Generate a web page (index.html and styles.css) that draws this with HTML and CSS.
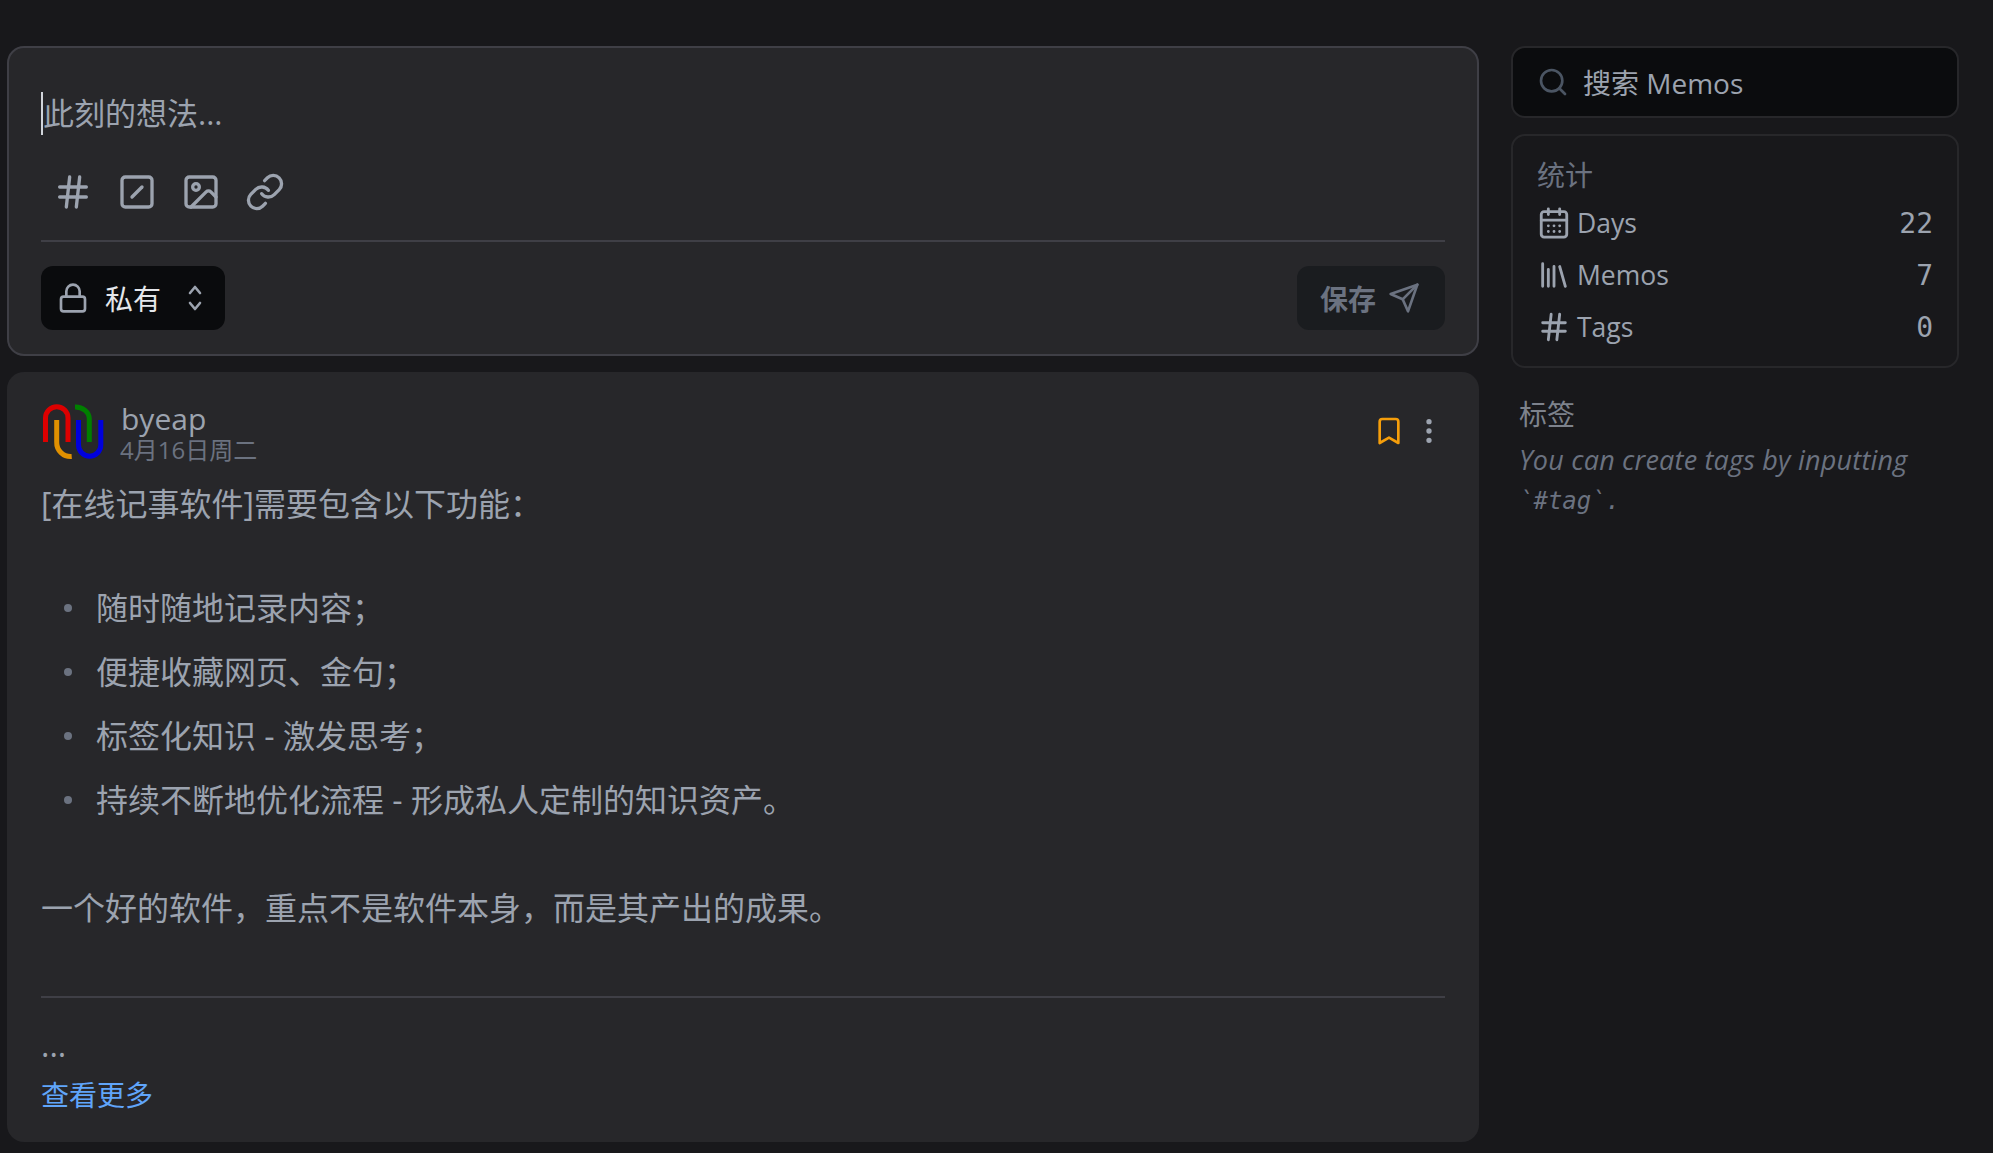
FILE: index.html
```html
<!DOCTYPE html>
<html lang="zh">
<head>
<meta charset="utf-8">
<title>Memos</title>
<link rel="stylesheet" href="styles.css">
</head>
<body>
<div class="page">
	<main class="main">
		<section class="card editor">
			<div class="editor-input"><span class="caret"></span>此刻的想法...</div>
			<div class="tools">
				<svg class="ico" viewBox="0 0 24 24"><path d="M4 9h16M4 15h16M10 3 8 21M16 3l-2 18"/></svg>
				<svg class="ico" viewBox="0 0 24 24"><rect x="3" y="3" width="18" height="18" rx="2"/><path d="m9 15 6-6"/></svg>
				<svg class="ico" viewBox="0 0 24 24"><rect x="3" y="3" width="18" height="18" rx="2"/><circle cx="9" cy="9" r="2"/><path d="m21 15-3.086-3.086a2 2 0 0 0-2.828 0L6 21"/></svg>
				<svg class="ico" viewBox="0 0 24 24"><path d="M10 13a5 5 0 0 0 7.54.54l3-3a5 5 0 0 0-7.07-7.07l-1.72 1.71"/><path d="M14 11a5 5 0 0 0-7.54-.54l-3 3a5 5 0 0 0 7.07 7.07l1.71-1.71"/></svg>
			</div>
			<div class="editor-foot">
				<div class="visibility">
					<svg class="ico-lock" viewBox="0 0 24 24"><rect x="3" y="11" width="18" height="11" rx="2"/><path d="M7 11V7a5 5 0 0 1 10 0v4"/></svg>
					<span class="visibility-label">私有</span>
					<svg class="ico-sm" viewBox="0 0 16 30"><path d="M3 10l5-6 5 6M3 20l5 6 5-6"/></svg>
				</div>
				<div class="save">保存
					<svg class="ico-send" viewBox="0 0 24 24"><path d="m22 2-7 20-4-9-9-4Z"/><path d="M22 2 11 13"/></svg>
				</div>
			</div>
		</section>

		<article class="card memo">
			<header class="memo-head">
				<svg class="logo" viewBox="0 0 62 56">
					<path stroke="#dd0000" d="M2.5 38V14a11.25 11.25 0 0 1 22.5 0v24"/>
					<path stroke="#e09000" d="M13.7 16v22a14 14 0 0 0 15 14.5"/>
					<path stroke="#007f00" d="M32 3a14 12 0 0 1 14.3 12v23"/>
					<path stroke="#0000dd" d="M35.5 16v25a11.15 11.15 0 0 0 22.3 0V16"/>
				</svg>
				<div class="memo-who">
					<div class="memo-name">byeap</div>
					<div class="memo-date">4月16日周二</div>
				</div>
				<svg class="bookmark" viewBox="0 0 24 24"><path d="m19 21-7-4-7 4V5a2 2 0 0 1 2-2h10a2 2 0 0 1 2 2v16z"/></svg>
				<svg class="more" viewBox="0 0 24 24"><circle cx="12" cy="5" r="1"/><circle cx="12" cy="12" r="1"/><circle cx="12" cy="19" r="1"/></svg>
			</header>
			<div class="memo-body">
				<p class="lead">[在线记事软件]需要包含以下功能：</p>
				<ul>
					<li>随时随地记录内容；</li>
					<li>便捷收藏网页、金句；</li>
					<li>标签化知识 - 激发思考；</li>
					<li>持续不断地优化流程 - 形成私人定制的知识资产。</li>
				</ul>
				<p class="closing">一个好的软件，重点不是软件本身，而是其产出的成果。</p>
				<hr>
				<p class="dots">...</p>
				<a class="more-link" href="#">查看更多</a>
			</div>
		</article>
	</main>

	<aside class="side">
		<div class="search">
			<svg class="search-ico" viewBox="0 0 24 24"><circle cx="11" cy="11" r="8"/><path d="m21 21-4.3-4.3"/></svg>
			<span>搜索 Memos</span>
		</div>
		<div class="stats">
			<div class="stats-title">统计</div>
			<div class="stat">
				<svg class="ico-stat" viewBox="0 0 24 24"><path d="M8 2v4M16 2v4M3 10h18M8 14h.01M12 14h.01M16 14h.01M8 18h.01M12 18h.01M16 18h.01"/><rect x="3" y="4" width="18" height="18" rx="2"/></svg>
				<span class="stat-name">Days</span><span class="stat-num">22</span>
			</div>
			<div class="stat">
				<svg class="ico-stat" viewBox="0 0 24 24"><path d="m16 6 4 14M12 6v14M8 8v12M4 4v16"/></svg>
				<span class="stat-name">Memos</span><span class="stat-num">7</span>
			</div>
			<div class="stat">
				<svg class="ico-stat" viewBox="0 0 24 24"><path d="M4 9h16M4 15h16M10 3 8 21M16 3l-2 18"/></svg>
				<span class="stat-name">Tags</span><span class="stat-num">0</span>
			</div>
		</div>
		<div class="tags">
			<div class="tags-title">标签</div>
			<p class="tags-hint">You can create tags by inputting <code>`#tag`.</code></p>
		</div>
	</aside>
</div>
</body>
</html>
```

FILE: styles.css
```css
* {box-sizing: border-box;}

html, body {
	margin: 0;
	height: 100%;
}

body {
	background: #18181b;
	color: #9ca3af;
	font-family: "Open Sans", "Noto Sans CJK SC", sans-serif;
	font-size: 32px;
	overflow: hidden;
}

svg {
	fill: none;
	stroke: currentColor;
	stroke-width: 2;
	stroke-linecap: round;
	stroke-linejoin: round;
	flex: none;
}

.page {
	display: flex;
	gap: 32px;
	padding: 46px 34px 0 7px;
}

.main {
	width: 1472px;
	display: flex;
	flex-direction: column;
	gap: 16px;
}

.card {
	background: #27272a;
	border-radius: 17px;
}

/* editor */
.editor {
	height: 310px;
	border: 2px solid #3f3f46;
	padding: 40px 32px 0;
}

.editor-input {
	position: relative;
	height: 51px;
	line-height: 50px;
	font-size: 31px;
	color: #9ca3af;
	padding-left: 2px;
}

.caret {
	position: absolute;
	left: 0;
	top: 4px;
	width: 2px;
	height: 43px;
	background: #d1d5db;
}

.tools {
	display: flex;
	gap: 24px;
	padding: 33px 0 0 12px;
	height: 103px;
	border-bottom: 2px solid #3f3f46;
}

.ico {
	width: 40px;
	height: 40px;
}

.ico-lock {
	width: 32px;
	height: 32px;
}

.ico-sm {
	width: 16px;
	height: 30px;
	stroke-width: 2.6;
}

.editor-foot {
	display: flex;
	justify-content: space-between;
	padding-top: 24px;
}

.visibility {
	display: flex;
	align-items: center;
	width: 184px;
	height: 64px;
	padding-left: 16px;
	background: #0a0b0d;
	border-radius: 12px;
}

.visibility-label {
	margin: 0 26px 0 16px;
	font-size: 28px;
	color: #e5e7eb;
}

.save {
	display: flex;
	align-items: center;
	gap: 12px;
	width: 148px;
	height: 64px;
	padding-left: 23px;
	background: #1a1c1f;
	border-radius: 12px;
	color: #6b7280;
	font-size: 28px;
	font-weight: 700;
}

.ico-send {
	width: 32px;
	height: 32px;
}

/* memo */
.memo {
	height: 770px;
	padding: 29px 34px 0;
}

.memo-head {
	display: flex;
	align-items: center;
	height: 62px;
	gap: 8px;
}

.logo {
	width: 62px;
	height: 56px;
	margin-left: 2px;
	stroke-width: 5;
	stroke-linecap: butt;
	stroke-linejoin: miter;
}

.memo-who {
	flex: 1;
	margin-left: 8px;
}

.memo-name {
	font-size: 30px;
	line-height: 34px;
}

.memo-date {
	font-size: 24px;
	line-height: 27px;
	color: #6b7280;
	margin-left: -1px;
}

.bookmark {
	width: 32px;
	height: 32px;
	margin-top: -2px;
	color: #f59e0b;
}

.more {
	width: 32px;
	height: 32px;
	margin-top: -2px;
	fill: #9ca3af;
	stroke: #9ca3af;
}

.memo-body p {
	margin: 0;
	line-height: 52px;
}

.memo-body .lead {
	margin-top: 15px;
}

.memo-body ul {
	margin: 46px 0 0;
	padding: 0;
	list-style: none;
}

.memo-body li {
	display: flex;
	align-items: center;
	height: 64px;
	line-height: 64px;
}

.memo-body li::before {
	content: "";
	flex: none;
	width: 8px;
	height: 8px;
	margin: 0 24px 0 23px;
	border-radius: 50%;
	background: #6b7280;
}

.memo-body .closing {
	margin-top: 50px;
}

.memo-body hr {
	margin: 62px 0 0;
	border: 0;
	border-top: 2px solid #3f3f46;
}

.memo-body .dots {
	margin-top: 21px;
}

.more-link {
	display: block;
	margin-top: -2px;
	line-height: 52px;
	font-size: 28px;
	color: #60a5fa;
	text-decoration: none;
}

/* sidebar */
.side {
	width: 448px;
}

.search {
	display: flex;
	align-items: center;
	gap: 14px;
	height: 72px;
	padding-left: 24px;
	background: #0b0c0e;
	border: 2px solid #27272a;
	border-radius: 14px;
	font-size: 28px;
	color: #9ca3af;
}

.search-ico {
	width: 32px;
	height: 32px;
	color: #4b5563;
}

.stats {
	margin-top: 16px;
	height: 234px;
	padding: 17px 24px 0;
	border: 2px solid #27272a;
	border-radius: 14px;
}

.stats-title {
	font-size: 28px;
	line-height: 44px;
	color: #6b7280;
}

.stat {
	display: flex;
	align-items: center;
	height: 52px;
	font-size: 26.5px;
	color: #9ca3af;
}

.ico-stat {
	width: 34px;
	height: 34px;
}

.stat-name {
	flex: 1;
	margin-left: 6px;
}

.stat-num {
	font-family: "DejaVu Sans Mono", monospace;
	font-size: 28px;
}

.tags {
	padding: 26px 8px 0;
}

.tags-title {
	font-size: 28px;
	line-height: 40px;
	color: #7d828c;
}

.tags-hint {
	margin: 6px 0 0;
	font-size: 27px;
	letter-spacing: 0.2px;
	line-height: 39px;
	font-style: italic;
	color: #6b7280;
}

.tags-hint code {
	font-family: "DejaVu Sans Mono", monospace;
	font-size: 24px;
	letter-spacing: 0;
}
```
